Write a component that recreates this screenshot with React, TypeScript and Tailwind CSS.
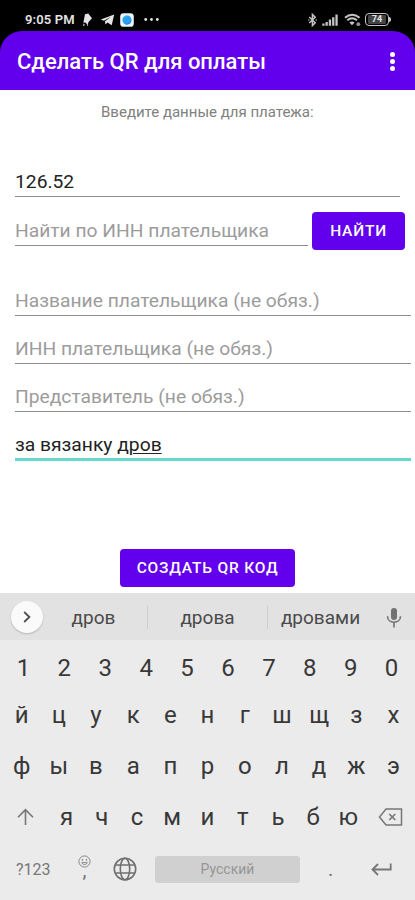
import type { ReactNode } from "react";
import { clsx } from "clsx";

const NUMBERS = "1234567890".split("");
const TOP_ROW = "йцукенгшщзх".split("");
const HOME_ROW = "фывапролджэ".split("");
const BOTTOM_ROW = "ячсмитьбю".split("");

function StatusBar() {
  return (
    <div className="flex h-[31px] items-center bg-black pl-[25px] pr-6 pt-2 text-[#e4e4e4]">
      <span className="w-[51px] whitespace-nowrap text-[13px] font-semibold leading-4 tracking-[0.15px]">9:05 PM</span>
      <svg viewBox="0 0 11 14" className="ml-[6px] h-[14px] w-[11px]" fill="currentColor">
        <path d="M3 1.2 6.2.6 10 5.2 6.2 9.4 6 12.4 3.8 9.8 1.4 9.4Z" />
        <path d="M1.2 10.4 3 11.2 2.2 13H1ZM5 11.5l1.4.8-1.2 1Z" opacity=".7" />
      </svg>
      <svg viewBox="0 0 15 12" className="ml-[7px] h-3 w-[15px]" fill="currentColor">
        <path d="M.8 5.5 14.2.6 11.7 11.3 7.5 8.5 5.4 10.5 5 7.3 11 2.8 3.9 6.7Z" />
      </svg>
      <svg viewBox="0 0 14 14" className="ml-[5px] size-[14px]">
        <rect x=".2" y=".2" width="13.6" height="13.6" rx="3.4" fill="#eef5fa" />
        <circle cx="7" cy="7" r="4.6" fill="#2ba0ef" />
        <path d="M3 5.5A4.4 4.4 0 0 1 9.8 3.3 7 7 0 0 0 3 5.5Z" fill="#43d4ef" />
        <path d="M11.3 7.5A4.6 4.6 0 0 1 5 11a7 7 0 0 0 6.3-3.5Z" fill="#1470d6" />
      </svg>
      <svg viewBox="0 0 15 3" className="ml-[10px] h-[3px] w-[15px]" fill="currentColor">
        <circle cx="1.7" cy="1.5" r="1.4" />
        <circle cx="7.5" cy="1.5" r="1.4" />
        <circle cx="13.3" cy="1.5" r="1.4" />
      </svg>

      <div className="ml-auto flex items-center text-[#c4c4c4]">
        <svg viewBox="0 0 9 14" className="h-[14px] w-[9px]" fill="none" stroke="currentColor" strokeWidth="1.5">
          <path d="M1.2 4 7.2 9.8 4.4 12.6V1.4L7.2 4.2 1.2 10" />
          <path d="M.3 7h1M7.7 7h1" />
        </svg>
        <svg viewBox="0 0 16 12" className="ml-[5px] h-3 w-4" fill="currentColor">
          <path d="M.3 9.5h2.3v2.2H.3ZM3.5 8h2.3v3.7H3.5ZM6.8 5.6h2.3v6.1H6.8ZM10.1 3.2h2.3v8.5h-2.3ZM13.4.4h2.3v11.3h-2.3Z" />
        </svg>
        <svg viewBox="0 0 17 14" className="ml-[6px] h-[14px] w-[17px]" fill="none" stroke="currentColor">
          <path d="M1 4.7Q8-1.3 15.6 4.7" strokeWidth="2" />
          <path d="M3.3 7.3Q8 3.4 13 7.3" strokeWidth="1.9" />
          <path d="M5.4 9.4Q8 7.4 10.6 9.4L8 12.2Z" fill="currentColor" stroke="none" />
          <circle cx="14.3" cy="11.2" r="1.9" fill="currentColor" stroke="none" opacity=".75" />
        </svg>
        <div className="ml-[4px] flex items-center">
          <div className="flex h-[13px] w-[24px] items-center justify-center rounded-[4px] border-[1.5px] border-current">
            <span className="flex h-[9px] w-[18px] items-center justify-center rounded-[1px] bg-[#444] text-[9px] font-bold leading-none text-[#e4e4e4]">
              74
            </span>
          </div>
          <div className="h-[5px] w-[2px] rounded-r-sm bg-current" />
        </div>
      </div>
    </div>
  );
}

function AppBar() {
  return (
    <div className="bg-black">
      <header className="flex h-[59px] items-center justify-between rounded-t-[22px] bg-[#6200ee] pl-[17px] pr-[20px] text-white">
        <h1 className="whitespace-nowrap pt-[3px] text-[22px] font-medium leading-6">Сделать QR для оплаты</h1>
        <button type="button" className="flex flex-col gap-[2px] pt-px">
          <span className="size-[5px] rounded-full bg-white" />
          <span className="size-[5px] rounded-full bg-white" />
          <span className="size-[5px] rounded-full bg-white" />
        </button>
      </header>
    </div>
  );
}

function Field({ children, filled, active, className }: { children: ReactNode; filled?: boolean; active?: boolean; className?: string }) {
  return (
    <div
      className={clsx(
        "flex h-[31px] items-end whitespace-nowrap text-[19.25px] leading-6",
        active ? "border-b-[3px] border-[#66d9cc] pb-px" : "border-b border-[#8d8d8d] pb-[2px]",
        filled ? "text-[#222]" : "text-[#9c9c9c]",
        className,
      )}
    >
      {children}
    </div>
  );
}

function Key({ children }: { children: ReactNode }) {
  return <span className="flex flex-1 justify-center">{children}</span>;
}

function KeyRow({ keys, className }: { keys: string[]; className?: string }) {
  return (
    <div className={clsx("flex text-[24px] leading-7", className)}>
      {keys.map((k) => (
        <Key key={k}>{k}</Key>
      ))}
    </div>
  );
}

function Suggestions() {
  return (
    <div className="flex h-[47px] items-center bg-[#e2e2e2] pt-[1px] text-[19px] text-[#4a4a4a]">
      <span className="ml-[11px] flex size-8 items-center justify-center rounded-full bg-[#fafafa] shadow-[0_1px_2px_rgba(0,0,0,0.2)]">
        <svg viewBox="0 0 8 12" className="h-3 w-2" fill="none" stroke="#505050" strokeWidth="1.8">
          <path d="M1.2 1 6.4 6 1.2 11" />
        </svg>
      </span>
      <span className="ml-[-3px] w-[107px] pt-[2px] text-center">дров</span>
      <span className="h-[23px] w-px bg-[#cecece]" />
      <span className="w-[119px] pt-[2px] text-center">дрова</span>
      <span className="h-[23px] w-px bg-[#cecece]" />
      <span className="w-[105px] pt-[2px] text-center">дровами</span>
      <svg viewBox="0 0 16 21" className="ml-[13px] h-[21px] w-4" fill="none" stroke="#717171">
        <rect x="5" y="1" width="6" height="12" rx="3" fill="#717171" stroke="none" />
        <path d="M1.5 9.2c0 8 13 8 13 0M8 15.3V20.5" strokeWidth="1.6" />
      </svg>
    </div>
  );
}

function Keyboard() {
  return (
    <div className="h-[307px] bg-[#ebebeb] text-[#383838]">
      <Suggestions />
      <KeyRow keys={NUMBERS} className="mt-[14px] px-[3px]" />
      <KeyRow keys={TOP_ROW} className="mt-[19px] px-[3px]" />
      <KeyRow keys={HOME_ROW} className="mt-[23px] px-[3px]" />
      <div className="mt-[23px] flex items-center">
        <svg viewBox="0 0 17 18" className="ml-[17px] h-[18px] w-[17px]" fill="none" stroke="#777" strokeWidth="1.6">
          <path d="M8.5 17V2M1 9.2 8.5 1.7 16 9.2" />
        </svg>
        <KeyRow keys={BOTTOM_ROW} className="ml-[15px] w-[317px]" />
        <svg viewBox="0 0 25 18" className="ml-[12px] h-[18px] w-[25px]" fill="none" stroke="#777" strokeWidth="1.5">
          <path d="M8 1H23.5V17H8L1.5 9Z" />
          <path d="M11.3 6 17.3 12M17.3 6 11.3 12" strokeWidth="1.7" />
        </svg>
      </div>
      <div className="mt-[18px] flex h-10 items-center text-[#777]">
        <span className="ml-[16px] w-[35px] whitespace-nowrap pt-px text-[16px]">?123</span>
        <span className="ml-[27px] flex h-7 w-[13px] flex-col items-center">
          <svg viewBox="0 0 14 14" className="size-[13px] shrink-0" fill="none" stroke="#808080" strokeWidth="1">
            <circle cx="7" cy="7" r="6" />
            <path d="M4 8.2c1.2 2.8 4.8 2.8 6 0Z" />
            <circle cx="4.8" cy="5.3" r=".5" fill="#808080" />
            <circle cx="9.2" cy="5.3" r=".5" fill="#808080" />
          </svg>
          <span className="mt-[-6px] text-[20px] leading-4">,</span>
        </span>
        <svg viewBox="0 0 24 24" className="ml-[22px] size-6" fill="none" stroke="#707070" strokeWidth="1.6">
          <circle cx="12" cy="12" r="10.7" />
          <ellipse cx="12" cy="12" rx="4.7" ry="10.7" />
          <path d="M2.2 8H21.8M2.2 16H21.8" />
        </svg>
        <span className="ml-[18px] flex h-[27px] w-[145px] items-center justify-center rounded-[3px] bg-[#d0d0d0] text-[14px] text-[#969696]">
          Русский
        </span>
        <span className="ml-[28px] w-[5px] text-[20px] leading-6">.</span>
        <svg viewBox="0 0 21 14" className="ml-[38px] h-[14px] w-[21px]" fill="none" stroke="#777" strokeWidth="1.8">
          <path d="M19.7 1.5V7.5H2M7 2 1.5 7.5 7 13" />
        </svg>
      </div>
    </div>
  );
}

export default function App() {
  return (
    <div className="flex h-[900px] w-[415px] flex-col overflow-hidden bg-white font-[Roboto,sans-serif]">
      <StatusBar />
      <AppBar />
      <main className="flex flex-1 flex-col pl-[15px] pr-1">
        <p className="mt-[12px] whitespace-nowrap pl-[86px] text-[15px] leading-5 text-[#808080]">
          Введите данные для платежа:
        </p>
        <Field filled className="mt-[44px] w-[385px]">
          126.52
        </Field>
        <div className="mt-[15px] flex h-[38px] items-start">
          <Field className="mt-[3px] w-[293px]">Найти по ИНН плательщика</Field>
          <button type="button" className="ml-1 h-[38px] w-[93px] rounded-[4px] bg-[#6200ee] pt-px text-[15.5px] font-medium tracking-[0.8px] text-white">
            НАЙТИ
          </button>
        </div>
        <Field className="mt-[35px]">Название плательщика (не обяз.)</Field>
        <Field className="mt-[17px]">ИНН плательщика (не обяз.)</Field>
        <Field className="mt-[17px]">Представитель (не обяз.)</Field>
        <Field filled active className="mt-[18px]">
          <span>
            за вязанку <span className="underline decoration-1 underline-offset-2">дров</span>
          </span>
        </Field>
        <button type="button" className="ml-[105px] mt-[88px] h-[38px] w-[175px] whitespace-nowrap rounded-[4px] bg-[#6200ee] pt-px text-[15.5px] font-medium tracking-[0.8px] text-white">
          СОЗДАТЬ QR КОД
        </button>
      </main>
      <Keyboard />
    </div>
  );
}
